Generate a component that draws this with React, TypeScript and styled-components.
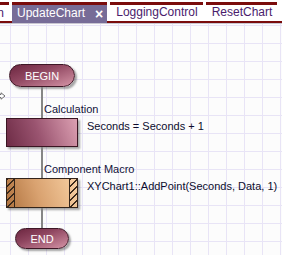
import styled, { createGlobalStyle } from 'styled-components';

const GlobalStyle = createGlobalStyle`
  html, body {
    margin: 0;
    padding: 0;
    background: #fcfcfc;
    overflow: hidden;
  }
  body {
    font-family: "Liberation Sans", Arial, sans-serif;
  }
`;

const Page = styled.div`
  width: 282px;
  height: 255px;
  display: flex;
  flex-direction: column;
  overflow: hidden;
`;

const TabBar = styled.div`
  display: flex;
  align-items: flex-start;
  gap: 3px;
  height: 19px;
  padding-top: 2px;
  background: #ffffff;
  border-bottom: 2px solid #7a0c0c;
`;

const Tab = styled.div<{ $active?: boolean; $clipped?: boolean }>`
  display: flex;
  align-items: center;
  justify-content: ${(p) => (p.$clipped ? 'flex-end' : 'flex-start')};
  gap: 10px;
  flex-shrink: 0;
  box-sizing: border-box;
  height: ${(p) => (p.$active ? '21px' : '19px')};
  margin-bottom: ${(p) => (p.$active ? '-2px' : '0')};
  padding: ${(p) =>
    p.$clipped ? '0 5px 0 0' : p.$active ? '0 4px 2px 5px' : '0 5px 2px 6px'};
  width: ${(p) => (p.$clipped ? '9px' : 'auto')};
  overflow: hidden;
  white-space: nowrap;
  border-top: 3px solid #7a0c0c;
  background: ${(p) => (p.$active ? '#776c97' : '#ffffff')};
  color: ${(p) => (p.$active ? '#ffffff' : '#4a1c6c')};
  font-size: 12px;
`;

const CloseMark = styled.span`
  font-size: 14px;
  font-weight: bold;
  line-height: 1;
  margin-top: 1px;
`;

const Canvas = styled.div`
  position: relative;
  flex: 1;
  border-top: 1px solid #c9c6d2;
  background-color: #fcfcfc;
  background-image:
    linear-gradient(to right, #e8e4f6 1px, transparent 1px),
    linear-gradient(to bottom, #e8e4f6 1px, transparent 1px);
  background-size: 18px 18px;
  background-position: 10px 19px;
  padding: 40px 0 0 6px;
`;

const Flow = styled.div`
  display: flex;
  flex-direction: column;
  align-items: flex-start;
`;

const Terminal = styled.div<{ $width: number; $height: number; $indent: number }>`
  box-sizing: border-box;
  width: ${(p) => p.$width}px;
  height: ${(p) => p.$height}px;
  margin-left: ${(p) => p.$indent}px;
  border-radius: 999px;
  border: 1px solid #3e1726;
  background: linear-gradient(160deg, #6c2640 0%, #8f4660 40%, #d594a6 100%);
  box-shadow: 2px 2px 2px rgba(0, 0, 0, 0.35);
  display: flex;
  align-items: center;
  justify-content: center;
  color: #ffffff;
  font-size: 11px;
`;

const Connector = styled.div<{ $height: number }>`
  box-sizing: border-box;
  height: ${(p) => p.$height}px;
  margin-left: 35px;
  border-left: 2px solid #868686;
  display: flex;
  align-items: flex-end;
  padding: 0 0 2px 1px;
`;

const StepLabel = styled.span`
  font-size: 11px;
  line-height: 13px;
  color: #12123a;
  white-space: nowrap;
`;

const StepRow = styled.div`
  display: flex;
  align-items: flex-start;
  gap: 9px;
`;

const CalcBox = styled.div`
  box-sizing: border-box;
  width: 72px;
  height: 29px;
  border: 1px solid #3a1522;
  background: linear-gradient(70deg, #6e2c46 0%, #9a5470 45%, #dca0b2 100%);
  box-shadow: 2px 2px 2px rgba(0, 0, 0, 0.35);
`;

const MacroBox = styled.div`
  box-sizing: border-box;
  width: 72px;
  height: 30px;
  display: flex;
  border: 1px solid #33241a;
  background: linear-gradient(70deg, #b0733f 0%, #d9a270 45%, #f7cfa2 100%);
  box-shadow: 2px 2px 2px rgba(0, 0, 0, 0.35);
`;

const Hatch = styled.div<{ $side: 'left' | 'right' }>`
  width: 7px;
  flex-shrink: 0;
  ${(p) => (p.$side === 'left' ? 'border-right' : 'border-left')}: 1px solid #33241a;
  background: repeating-linear-gradient(
    -45deg,
    transparent 0px,
    transparent 4px,
    #3b2a1c 4px,
    #3b2a1c 5px
  );
`;

const MacroBody = styled.div`
  flex: 1;
`;

const StepText = styled.span`
  margin-top: 2px;
  font-size: 11px;
  line-height: 13px;
  color: #0c0c2e;
  white-space: nowrap;
`;

const PointerMark = styled.svg`
  position: absolute;
  left: -4px;
  top: 68px;
`;

export default function App() {
  return (
    <Page>
      <GlobalStyle />
      <TabBar>
        <Tab $clipped>Main</Tab>
        <Tab $active>
          UpdateChart
          <CloseMark>×</CloseMark>
        </Tab>
        <Tab>LoggingControl</Tab>
        <Tab>ResetChart</Tab>
      </TabBar>
      <Canvas>
        <PointerMark width="10" height="8" viewBox="0 0 10 8">
          <path
            d="M0.5 2.5 H5 V0.8 L9 4 L5 7.2 V5.5 H0.5 Z"
            fill="#ffffff"
            stroke="#6d6d6d"
            strokeWidth="1"
          />
        </PointerMark>
        <Flow>
          <Terminal $width={66} $height={23} $indent={3}>
            BEGIN
          </Terminal>
          <Connector $height={31}>
            <StepLabel>Calculation</StepLabel>
          </Connector>
          <StepRow>
            <CalcBox />
            <StepText>Seconds = Seconds + 1</StepText>
          </StepRow>
          <Connector $height={31}>
            <StepLabel>Component Macro</StepLabel>
          </Connector>
          <StepRow>
            <MacroBox>
              <Hatch $side="left" />
              <MacroBody />
              <Hatch $side="right" />
            </MacroBox>
            <StepText>XYChart1::AddPoint(Seconds, Data, 1)</StepText>
          </StepRow>
          <Connector $height={20} />
          <Terminal $width={54} $height={21} $indent={9}>
            END
          </Terminal>
        </Flow>
      </Canvas>
    </Page>
  );
}
